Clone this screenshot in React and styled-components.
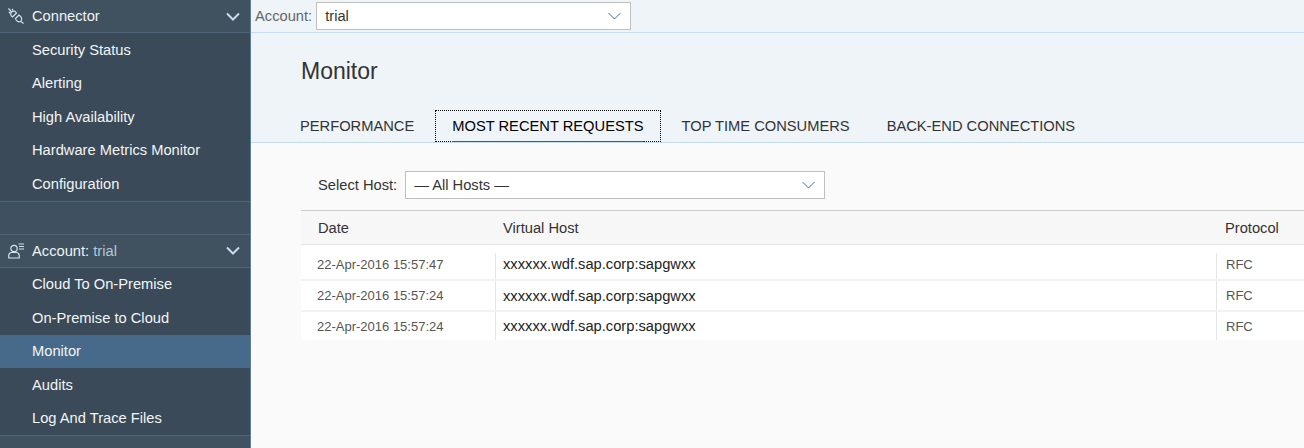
import React from 'react';
import styled, { createGlobalStyle } from 'styled-components';

const GlobalStyle = createGlobalStyle`
    html, body {
        margin: 0;
        padding: 0;
        background: #fafafa;
    }
    body {
        font-family: "Liberation Sans", Arial, sans-serif;
        font-size: 14.7px;
    }
`

const Page = styled.div`
    display: flex;
    width: 1304px;
    height: 448px;
    overflow: hidden;
`

const Sidebar = styled.nav`
    display: flex;
    flex-direction: column;
    flex: 0 0 250px;
    background: #3f4f5e;
    border-right: 1px solid #5d7d9b;
`

const GroupHeader = styled.div`
    display: flex;
    align-items: center;
    height: 32px;
    padding: 0 10px 0 8px;
    background: #405160;
    border-top: ${props => props.$topLine ? '1px solid #4f6478' : 'none'};
    border-bottom: 1px solid #4f6478;
`

const HeaderIcon = styled.svg`
    flex: none;
    width: 16px;
    height: 16px;
    margin-right: 8px;
    fill: none;
    stroke: #d3e3f0;
    stroke-width: 1.2;
`

const HeaderTitle = styled.span`
    flex: 1;
    color: #eef3f7;
`

const AccountName = styled.span`
    color: #b5c8d9;
`

const Chevron = styled.svg`
    display: block;
    flex: none;
    width: ${props => props.$width}px;
    height: ${props => props.$height}px;
    fill: none;
    stroke: ${props => props.$color};
    stroke-width: ${props => props.$stroke};
`

const NavItem = styled.div`
    display: flex;
    align-items: center;
    height: 33.5px;
    padding-left: 32px;
    color: #f2f5f7;
    background: ${props => props.$active ? '#486a8a' : '#3b4a58'};
`

const Spacer = styled.div`
    box-sizing: border-box;
    height: 33px;
    background: #3f5060;
    border-top: 1px solid #4f6478;
`

const SideFoot = styled.div`
    flex: 1;
    background: #405160;
    border-top: 1px solid #4f6478;
`

const Main = styled.main`
    flex: 1;
    min-width: 0;
    background: #fafafa;
`

const TopBar = styled.div`
    display: flex;
    align-items: center;
    height: 32px;
    padding-left: 4px;
    background: #eff4f9;
    border-bottom: 1px solid #c6dcef;
`

const FieldLabel = styled.label`
    margin-right: ${props => props.$gap}px;
    color: ${props => props.$color};
`

const Select = styled.div`
    box-sizing: border-box;
    display: flex;
    align-items: center;
    justify-content: space-between;
    width: ${props => props.$width}px;
    height: 28px;
    padding: 0 9px 0 8px;
    background: #fff;
    border: 1px solid #bfbfbf;
    color: #333;
`

const PageHead = styled.header`
    height: 109px;
    background: #eff4f9;
    border-bottom: 1px solid #c6dcef;
    display: flex;
    flex-direction: column;
    justify-content: space-between;
`

const Title = styled.h1`
    margin: 25px 0 0 50px;
    font-size: 23px;
    font-weight: 400;
    line-height: 26px;
    color: #333;
`

const Tabs = styled.div`
    display: flex;
    padding-left: 33px;
`

const Tab = styled.div`
    position: relative;
    box-sizing: border-box;
    height: 32px;
    margin-right: 5px;
    padding: 6px ${props => props.$active ? 17 : 16}px 0;
    line-height: 20px;
    white-space: nowrap;
    color: ${props => props.$active ? '#000' : '#333'};
    outline: ${props => props.$active ? '1px dotted #000' : 'none'};
    outline-offset: -1px;

    &::after {
        content: '';
        display: ${props => props.$active ? 'block' : 'none'};
        position: absolute;
        left: 17px;
        right: 17px;
        bottom: 0;
        height: 1px;
        background: #346187;
    }
`

const HostRow = styled.div`
    box-sizing: border-box;
    display: flex;
    align-items: center;
    height: 67px;
    padding: 28px 0 11px 67px;
`

const Table = styled.div`
    margin-left: 50px;
    border-top: 1px solid #ccc;
`

const HeadRow = styled.div`
    display: grid;
    grid-template-columns: 194px 721px 1fr;
    align-items: center;
    height: 33px;
    background: #f7f7f7;
    border-bottom: 1px solid #e5e5e5;
    color: #333;
`

const HeadCell = styled.div`
    padding-left: ${props => props.$pad}px;
`

const Row = styled.div`
    box-sizing: border-box;
    display: grid;
    grid-template-columns: 194px 721px 1fr;
    height: ${props => props.$height}px;
    background: #fff;
    border-bottom: ${props => props.$last ? 'none' : '2px solid #f2f2f2'};
`

const Cell = styled.div`
    display: flex;
    align-items: center;
    margin-top: ${props => props.$inset}px;
    padding-bottom: ${props => props.$inset / 2}px;
    padding-left: ${props => props.$pad}px;
    border-left: ${props => props.$divider ? '1px solid #e5e5e5' : 'none'};
    font-size: ${props => props.$small ? '13px' : 'inherit'};
    color: ${props => props.$small ? '#555' : '#222'};
`

const connectorLinks = ['Security Status', 'Alerting', 'High Availability', 'Hardware Metrics Monitor', 'Configuration']
const accountLinks = ['Cloud To On-Premise', 'On-Premise to Cloud', 'Monitor', 'Audits', 'Log And Trace Files']
const tabs = ['PERFORMANCE', 'MOST RECENT REQUESTS', 'TOP TIME CONSUMERS', 'BACK-END CONNECTIONS']
const requests = [
    { date: '22-Apr-2016 15:57:47', height: 36, inset: 8 },
    { date: '22-Apr-2016 15:57:24', height: 31, inset: 0 },
    { date: '22-Apr-2016 15:57:24', height: 28, inset: 0, last: true },
]

const SidebarChevron = () => (
    <Chevron $width={14} $height={9} $color="#c9dcec" $stroke={2} viewBox="0 0 14 9">
        <path d="M1 1.5l6 6 6-6" />
    </Chevron>
)

const SelectChevron = () => (
    <Chevron $width={13} $height={8} $color="#4a6f92" $stroke={1} viewBox="0 0 13 8">
        <path d="M.5 1l6 6 6-6" />
    </Chevron>
)

const App = () => (
    <Page>
        <GlobalStyle />
        <Sidebar>
            <GroupHeader>
                <HeaderIcon viewBox="0 0 16 16">
                    <path d="M.5.5L3.500 4" />
                    <path d="M8.500 5L4.500 9C2.500 8 2 5.500 3.500 4 5 2.500 7.500 3 8.500 5z" />
                    <path d="M4 .8L5.200 2.500M.8 4L2.300 5.200" />
                    <path d="M11 7L7.500 10.500C8 13 10.500 14.500 12.500 13.500 14.500 12 14 9 11 7z" />
                    <path d="M13 13.500L15.500 15.500" />
                </HeaderIcon>
                <HeaderTitle>Connector</HeaderTitle>
                <SidebarChevron />
            </GroupHeader>
            {connectorLinks.map(link => <NavItem key={link}>{link}</NavItem>)}
            <Spacer />
            <GroupHeader $topLine>
                <HeaderIcon viewBox="0 0 16 16">
                    <circle cx="6" cy="5.500" r="3.200" />
                    <path d="M.8 15v-2.500c0-2 1.500-3 3-3h4.400c1.500 0 3 1 3 3V15z" />
                    <path d="M10.500 1h5.500M11 3.500h5M11 6h5" />
                </HeaderIcon>
                <HeaderTitle>Account: <AccountName>trial</AccountName></HeaderTitle>
                <SidebarChevron />
            </GroupHeader>
            {accountLinks.map(link => <NavItem key={link} $active={link === 'Monitor'}>{link}</NavItem>)}
            <SideFoot />
        </Sidebar>
        <Main>
            <TopBar>
                <FieldLabel $gap={4} $color="#666">Account:</FieldLabel>
                <Select $width={315}>
                    <span>trial</span>
                    <SelectChevron />
                </Select>
            </TopBar>
            <PageHead>
                <Title>Monitor</Title>
                <Tabs>
                    {tabs.map((tab, i) => (
                        <Tab key={tab} $active={i === 1}>{tab}</Tab>
                    ))}
                </Tabs>
            </PageHead>
            <HostRow>
                <FieldLabel $gap={8} $color="#333">Select Host:</FieldLabel>
                <Select $width={420}>
                    <span>— All Hosts —</span>
                    <SelectChevron />
                </Select>
            </HostRow>
            <Table>
                <HeadRow>
                    <HeadCell $pad={17}>Date</HeadCell>
                    <HeadCell $pad={8}>Virtual Host</HeadCell>
                    <HeadCell $pad={9}>Protocol</HeadCell>
                </HeadRow>
                {requests.map((request, i) => (
                    <Row key={i} $height={request.height} $last={request.last}>
                        <Cell $small $pad={16} $inset={request.inset}>{request.date}</Cell>
                        <Cell $divider $pad={7} $inset={request.inset}>xxxxxx.wdf.sap.corp:sapgwxx</Cell>
                        <Cell $divider $small $pad={9} $inset={request.inset}>RFC</Cell>
                    </Row>
                ))}
            </Table>
        </Main>
    </Page>
)

export default App
